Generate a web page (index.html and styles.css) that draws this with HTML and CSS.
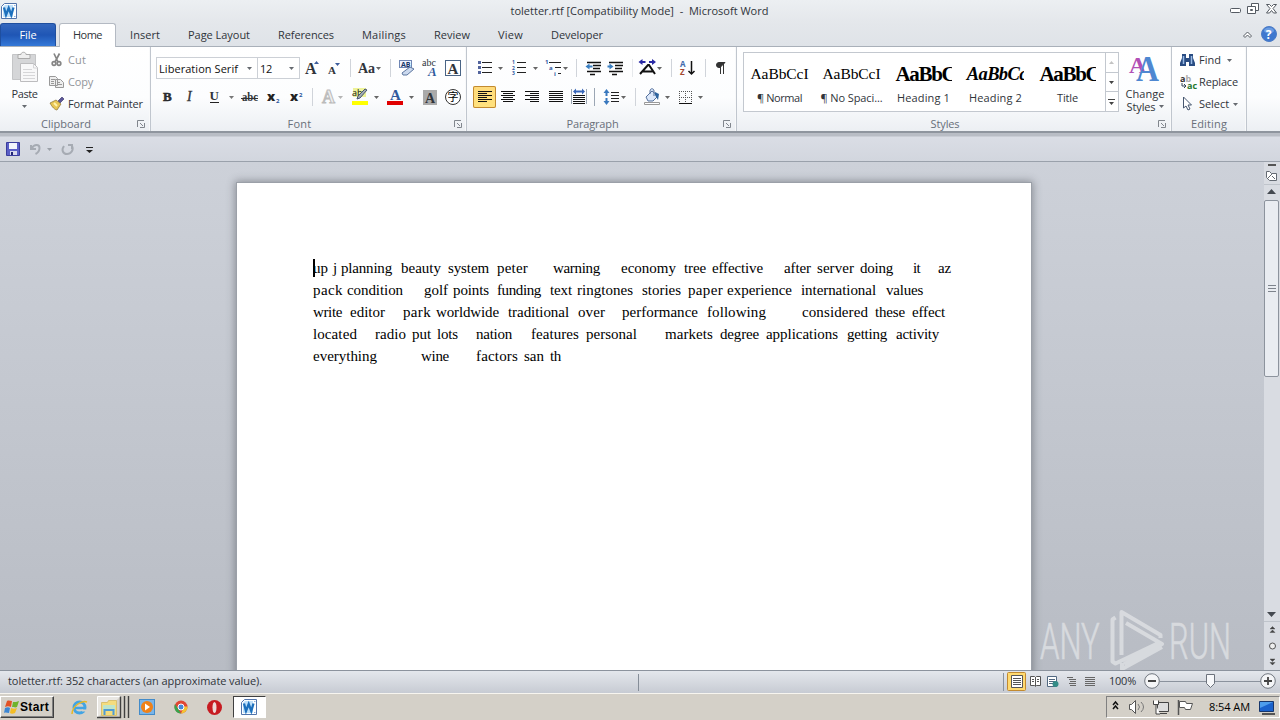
FILE: index.html
```html
<!DOCTYPE html>
<html lang="en">
<head>
<meta charset="utf-8">
<title>toletter.rtf [Compatibility Mode] - Microsoft Word</title>
<link rel="stylesheet" href="styles.css">
</head>
<body>
<svg class="defs" width="0" height="0">
  <defs>
    <symbol id="word" viewBox="0 0 16 16"><path d="M3.500.5h12v15H.5v-12z" fill="#fff" stroke="#5274ab"/><path d="M4 2h8v12H2V4z" fill="#bfe0fa"/><path d="M3 4.500l2 7.500 2.700-7 2.600 7 2.200-7.500" fill="none" stroke="#1d70bd" stroke-width="2.300"/><path d="M13 2.500h1.500M13 13.500h1.500" stroke="#8eb2de"/></symbol>
    <symbol id="arr" viewBox="0 0 5 3"><path d="M0 0h5L2.500 3z" fill="#666a70"/></symbol>
    <symbol id="launch" viewBox="0 0 8 8"><path d="M.5 7V.5H7M3 3l3 3M7.500 3v4.500H3" fill="none" stroke="#81868d"/></symbol>
  </defs>
</svg>
<header class="titlebar">
  <svg class="logo" width="16" height="16"><use href="#word"/></svg>
  <span class="title" data-w="258">toletter.rtf [Compatibility Mode]  -  Microsoft Word</span>
  <svg class="winbtns" width="54" height="16" viewBox="1226 2 54 16" fill="#fff" stroke="#555b63"><rect x="1230.500" y="8.500" width="10" height="4" rx="1"/><path d="M1251.500 3.500h7v7h-7z"/><path d="M1247.500 6.500h8v7h-8zM1250.500 9.500h2v1h-2z"/><path d="M1266.500 4.500h3l2 2 2-2h3l-3.500 4 3.500 4.500h-3l-2-2.500-2 2.500h-3l3.500-4.500z"/></svg>
</header>
<nav class="tabs">
  <span class="tab file"><b data-w="17">File</b></span>
  <span class="tab home"><b data-w="29">Home</b></span>
  <span class="tab" style="width:58px"><b data-w="30">Insert</b></span>
  <span class="tab" style="width:90px"><b data-w="62">Page Layout</b></span>
  <span class="tab" style="width:84px"><b data-w="56">References</b></span>
  <span class="tab" style="width:72px"><b data-w="44">Mailings</b></span>
  <span class="tab" style="width:64px"><b data-w="36">Review</b></span>
  <span class="tab" style="width:53px"><b data-w="25">View</b></span>
  <span class="tab" style="width:80px"><b data-w="52">Developer</b></span>
  <svg class="help" width="44" height="20" viewBox="1236 25 44 20"><path d="M1243.500 36l4-4 4 4-1.500 1.500-2.500-2.500-2.500 2.500z" fill="#fff" stroke="#555b63"/><circle cx="1269" cy="34" r="7.500" fill="#3f78cf" stroke="#4d7cc5"/><ellipse cx="1269" cy="30.500" rx="5" ry="3" fill="#6c9de2"/><text x="1265.800" y="38.500" font-size="12" font-weight="700" fill="#fff">?</text></svg>
</nav>
<main class="ribbon">
  <section class="group g-clip">
    <div class="body">
      <div class="paste">
        <svg width="30" height="34" viewBox="10 50 30 34"><path d="M12.500 54.500h23v25h-23z" fill="#d5d6d8" stroke="#c4c5c7"/><path d="M18 54.500h3c0-3 5-3 5 0h4v4H18z" fill="#eee" stroke="#aaa"/><path d="M20.500 63.500h13l4 4v14h-17z" fill="#f8f8f9" stroke="#bcbcbe"/><path d="M33.500 64v4h4M23 69.500h9M23 72.500h12M23 75.500h12M23 78.500h12" fill="none" stroke="#d6d6d8"/></svg>
        <span class="lab" data-w="26">Paste</span>
        <svg width="5" height="3"><use href="#arr"/></svg>
      </div>
      <div class="stack">
        <div class="cmd dis"><svg width="19" height="20" viewBox="49 50 19 20" fill="none" stroke="#858585" stroke-width="1.700"><path d="M54 53.500l4 8.500M59.500 53.500L55 62"/><circle cx="54" cy="63.500" r="1.800"/><circle cx="59" cy="63.500" r="1.800"/></svg><span data-w="18">Cut</span></div>
        <div class="cmd dis"><svg width="19" height="20" viewBox="49 72 19 20" fill="#eee" stroke="#999"><path d="M49.500 76.500h6l2 2v7h-8zM55.500 79.500h5l3 3v5h-8z"/><path d="M51 79.500h4M51 81.500h3M51 83.500h3M57 82.500h3M57 84.500h5"/></svg><span data-w="25">Copy</span></div>
        <div class="cmd"><svg width="19" height="20" viewBox="49 94 19 20"><path d="M58 101l4-4 2 2-4 4z" fill="#5b579a" stroke="#443f70" stroke-width=".7"/><path d="M50 103l6-3 5 4-4 6c-2 0-5-3-7-7z" fill="#e8c654" stroke="#897030" stroke-width=".7"/><path d="M54 103l3 3" stroke="#fff2ac" stroke-width="2"/></svg><span data-w="75">Format Painter</span></div>
      </div>
    </div>
    <footer><span data-w="50">Clipboard</span><svg width="8" height="8"><use href="#launch"/></svg></footer>
  </section>

  <section class="group g-font">
    <div class="body col">
      <div class="row">
        <div class="combo name"><span data-w="79">Liberation Serif</span><svg width="5" height="3"><use href="#arr"/></svg></div>
        <div class="combo size"><span data-w="12">12</span><svg width="5" height="3"><use href="#arr"/></svg></div>
        <svg width="27" height="22" viewBox="300 57 27 22" class="serif"><text x="305" y="74" font-size="16">A</text><path d="M314 64l2.500-3 2.500 3z" fill="#3c5c9c"/></svg>
        <svg width="23" height="22" viewBox="327 57 23 22" class="serif"><text x="328" y="74" font-size="11">A</text><path d="M335 63h5l-2.500 3z" fill="#3c5c9c"/></svg>
        <svg width="41" height="22" viewBox="350 57 41 22" class="serif"><path d="M350.500 59v18" stroke="#d0d4da"/><text x="358" y="73" font-size="14">Aa</text><path d="M376 67h5l-2.500 3z" fill="#666"/><path d="M390.500 59v18" stroke="#d0d4da"/></svg>
        <svg width="29" height="22" viewBox="391 57 29 22"><rect x="399.500" y="60.500" width="12" height="7" fill="#eef4ff" stroke="#6f86b4"/><text x="401" y="67" font-size="7" font-weight="700" fill="#173568">AB</text><path d="M402 73l8-6 4 2-7 6h-4z" fill="#cbd9ee" stroke="#5d769f"/></svg>
        <svg width="23" height="22" viewBox="420 57 23 22" class="serif"><text x="422" y="66" font-size="10" font-weight="400">abc</text><text class="blue" x="428" y="76" font-size="13" font-style="italic">A</text></svg>
        <svg width="22" height="22" viewBox="443 57 22 22" class="serif"><rect x="445.500" y="60.500" width="15" height="15" fill="#fff" stroke="#496485"/><text x="447.500" y="73.500" font-size="15">A</text></svg>
      </div>
      <div class="row two">
        <svg width="23" height="22" viewBox="156 86 23 22" class="serif"><text x="163" y="101" font-size="13" stroke="#222" stroke-width=".5">B</text></svg>
        <svg width="23" height="22" viewBox="179 86 23 22" class="serif"><text x="187" y="101" font-size="14" font-style="italic" font-weight="400" stroke="#333" stroke-width=".3">I</text></svg>
        <svg width="36" height="22" viewBox="202 86 36 22" class="serif"><text x="209.500" y="100" font-size="13">U</text><path d="M210 102.500h9" stroke="#222"/><path d="M229 96h5l-2.500 3z" fill="#777"/></svg>
        <svg width="24" height="22" viewBox="238 86 24 22" class="serif"><text x="242" y="101" font-size="12" textLength="16" lengthAdjust="spacingAndGlyphs">abc</text><path d="M241 98.500h17" stroke="#333"/></svg>
        <svg width="23" height="22" viewBox="262 86 23 22"><text x="267" y="101" font-size="13" font-weight="800" fill="#222">x</text><text x="276" y="103" font-size="6" font-weight="700" fill="#28559c">2</text></svg>
        <svg width="27" height="22" viewBox="285 86 27 22"><text x="290" y="101" font-size="13" font-weight="800" fill="#222">x</text><text x="299" y="97" font-size="6" font-weight="700" fill="#28559c">2</text></svg>
        <svg width="37" height="22" viewBox="312 86 37 22" class="serif"><path d="M312.500 88v18" stroke="#d0d4da"/><text class="ghost" x="322" y="103" font-size="18">A</text><path d="M338 96h5l-2.500 3z" fill="#b5b5b5"/></svg>
        <svg width="36" height="22" viewBox="349 86 36 22"><rect x="353" y="88" width="13" height="9" fill="#eef399"/><text x="352" y="96" font-size="9" fill="#111">ab</text><path d="M367 90l-7 8-3 1 1-3 7-7z" fill="#a3acb5" stroke="#49586c"/><path d="M352 101h16v4h-16z" fill="#ff0"/><path d="M374 96h5l-2.500 3z" fill="#666"/></svg>
        <svg width="34" height="22" viewBox="385 86 34 22" class="serif"><text class="blue" x="390" y="100" font-size="15">A</text><path d="M387 101h16v4h-16z" fill="#e00000"/><path d="M409 96h5l-2.500 3z" fill="#666"/></svg>
        <svg width="22" height="22" viewBox="419 86 22 22" class="serif"><path d="M423 90h14v15h-14z" fill="#aaa"/><text x="425" y="102.500" font-size="14">A</text></svg>
        <svg width="24" height="22" viewBox="441 86 24 22"><circle cx="453" cy="97" r="7.500" fill="#fff" stroke="#333"/><text x="447.500" y="101" font-size="11" class="cjk">字</text></svg>
      </div>
    </div>
    <footer><span data-w="24">Font</span><svg width="8" height="8"><use href="#launch"/></svg></footer>
  </section>

  <section class="group g-para">
    <div class="body col">
      <div class="row">
        <svg width="36" height="22" viewBox="473 57 36 22"><path d="M482 62.500h10M482 67.500h10M482 72.500h10" stroke="#222"/><path d="M478 61h3v3h-3zM478 66h3v3h-3zM478 71h3v3h-3z" fill="#52649d"/><path d="M498 67h5l-2.500 3z" fill="#666"/></svg>
        <svg width="33" height="22" viewBox="509 57 33 22"><path d="M517 62.500h9M517 67.500h9M517 72.500h9" stroke="#222"/><g font-size="5" font-weight="700" fill="#3158a2"><text x="512" y="64">1</text><text x="512" y="69.500">2</text><text x="512" y="75">3</text></g><path d="M533 67h5l-2.500 3z" fill="#666"/></svg>
        <svg width="35" height="22" viewBox="542 57 35 22"><path d="M549 62.500h12M555 67.500h6M558 73.500h3" stroke="#222"/><g font-size="6" font-weight="700" fill="#3158a2"><text x="545" y="64">1</text><text x="549" y="70">a</text><text x="554" y="76">i</text></g><path d="M563 67h5l-2.500 3z" fill="#666"/><path d="M576.500 59v18" stroke="#d0d4da"/></svg>
        <svg width="30" height="22" viewBox="577 57 30 22"><path d="M587 62.500h14M593 65.500h8M593 68.500h7M587 71.500h14M590 74.500h5" stroke="#111" stroke-width="1.500"/><path d="M585.500 66.500l4-3v2h3v2h-3v2z" fill="#397ec1"/></svg>
        <svg width="25" height="22" viewBox="607 57 25 22"><path d="M609 62.500h14M615 65.500h8M615 68.500h7M609 71.500h14M612 74.500h5" stroke="#111" stroke-width="1.500"/><path d="M613.500 66.500l-4-3v2h-2v2h2v2z" fill="#397ec1"/></svg>
        <svg width="40" height="22" viewBox="632 57 40 22"><path d="M632 59v18M671.500 59v18" stroke="#d0d4da"/><path d="M640 74l8-9h1l6 9M643 71.500h10" fill="none" stroke="#111" stroke-width="2"/><path d="M638.500 62l4-3v2h3v2h-3v2zM656 62l-4-3v2h-3v2h3v2z" fill="#2929a5"/><path d="M657 67h5l-2.500 3z" fill="#666"/></svg>
        <svg width="34" height="22" viewBox="672 57 34 22"><text x="680" y="66.500" font-size="8" font-weight="700" fill="#436bad">A</text><text x="680" y="75" font-size="8" font-weight="700" fill="#a34731">Z</text><path d="M691.500 61v12M688.500 71l3 3 3-3" fill="none" stroke="#111" stroke-width="1.500"/><path d="M705.500 59v18" stroke="#d0d4da"/></svg>
        <svg width="25" height="22" viewBox="706 57 25 22"><path d="M725 62.500h-6a2.500 2.500 0 000 5h1zM720.500 63v11M723.500 63v11" fill="#333" stroke="#333"/></svg>
      </div>
      <div class="row two">
        <svg class="active" width="23" height="22" viewBox="473 86 23 22" stroke="#111" stroke-width="1"><path d="M478 91.500h14M478 93.500h9M478 95.500h14M478 97.500h9M478 99.500h14M478 101.500h9"/></svg>
        <svg width="24" height="22" viewBox="496 86 24 22" stroke="#111"><path d="M501 91.500h14M503 93.500h10M501 95.500h14M503 97.500h10M501 99.500h14M503 101.500h10"/></svg>
        <svg width="24" height="22" viewBox="520 86 24 22" stroke="#111"><path d="M525 91.500h14M530 93.500h9M525 95.500h14M530 97.500h9M525 99.500h14M530 101.500h9"/></svg>
        <svg width="24" height="22" viewBox="544 86 24 22" stroke="#111"><path d="M549 91.500h14M549 93.500h14M549 95.500h14M549 97.500h14M549 99.500h14M549 101.500h14"/></svg>
        <svg width="27" height="22" viewBox="568 86 27 22"><path d="M573 95.500h12M573 97.500h12M573 99.500h12M573 101.500h12M573 103.500h12" stroke="#111"/><path d="M571.500 89v15M586.500 89v15M594.500 88v18" stroke="#9ba6b4"/><path d="M573 91.500l3-3v2h6v-2l3 3-3 3v-2h-6v2z" fill="#3867b9"/></svg>
        <svg width="41" height="22" viewBox="595 86 41 22"><path d="M611 92.500h8M611 95.500h8M611 98.500h8M611 101.500h8" stroke="#222"/><path d="M606.500 89l3 4h-2v3h-2v-3h-2zM606.500 105l3-4h-2v-3h-2v3h-2z" fill="#3978be"/><path d="M621 96h5l-2.500 3z" fill="#666"/><path d="M635.500 88v18" stroke="#d0d4da"/></svg>
        <svg width="38" height="22" viewBox="636 86 38 22"><path d="M646 97l6-6 6 5-5 5h-5zM650 94v-3c0-3 4-3 4 0v5" fill="#dce8fa" stroke="#536f9b"/><path d="M655 92l4 2-1 6-3-5z" fill="#2e649f"/><path d="M644.500 102.500h15v2h-15z" fill="#fff" stroke="#999"/><path d="M665 96h5l-2.500 3z" fill="#666"/></svg>
        <svg width="33" height="22" viewBox="674 86 33 22"><path d="M679 91.500h13M679 97.500h13M679.500 91v12M685.500 91v12M691.500 91v12" stroke="#555" stroke-dasharray="1 1"/><path d="M679 103.500h13" stroke="#111"/><path d="M698 96h5l-2.500 3z" fill="#666"/></svg>
      </div>
    </div>
    <footer><span data-w="52">Paragraph</span><svg width="8" height="8"><use href="#launch"/></svg></footer>
  </section>

  <section class="group g-styles">
    <div class="body">
      <div class="gallery">
        <div class="sty"><i data-w="58">AaBbCcI</i><span data-w="45">¶ Normal</span></div>
        <div class="sty"><i data-w="58">AaBbCcI</i><span data-w="62">¶ No Spaci...</span></div>
        <div class="sty bold"><i data-w="60">AaBb<u>C</u></i><span data-w="53">Heading 1</span></div>
        <div class="sty bold it"><i data-w="60">AaBbC<u>c</u></i><span data-w="53">Heading 2</span></div>
        <div class="sty bold"><i data-w="60">AaBb<u>C</u></i><span data-w="21">Title</span></div>
        <svg class="gscroll" width="13" height="58" viewBox="0 0 13 58"><path d="M.5 0v58M0 19.500h13M0 38.500h13" stroke="#c3c8cf"/><path d="M4 11h5L6.500 8z" fill="#c3c3c3"/><path d="M4 28h5l-2.500 3zM4 49h5l-2.500 3z" fill="#444"/><path d="M3 46.500h7" stroke="#444"/></svg>
      </div>
      <div class="change">
        <svg width="34" height="34" viewBox="1128 51 34 34" class="serif"><text class="violet" x="1129" y="73" font-size="24">A</text><text class="sky" x="1136" y="81" font-size="35" textLength="23" lengthAdjust="spacingAndGlyphs">A</text></svg>
        <span class="lab" data-w="39">Change</span>
        <span class="lab2"><span data-w="29">Styles</span><svg width="5" height="3"><use href="#arr"/></svg></span>
      </div>
    </div>
    <footer><span data-w="29">Styles</span><svg width="8" height="8"><use href="#launch"/></svg></footer>
  </section>

  <section class="group g-edit">
    <div class="body">
      <div class="stack">
        <div class="cmd"><svg width="19" height="20" viewBox="1180 50 19 20"><path d="M1182 54h4v4h3v-4h4v4l2 5v3h-6v-4h-3v4h-6v-3l2-5z" fill="#294c83"/><path d="M1183.500 56v8M1191.500 56v8" stroke="#9abbe5" stroke-width="1.500"/></svg><span data-w="22">Find</span><svg class="dd" width="5" height="3"><use href="#arr"/></svg></div>
        <div class="cmd"><svg width="19" height="20" viewBox="1180 72 19 20" font-weight="700"><text x="1180" y="82" font-size="9" fill="#333">a<tspan fill="#aaa">b</tspan></text><text x="1187" y="89" font-size="9" fill="#26782d">ac</text><path d="M1182 83v3h4M1184 84l2 2-2 2" fill="none" stroke="#345"/></svg><span data-w="39">Replace</span></div>
        <div class="cmd"><svg width="19" height="20" viewBox="1180 94 19 20"><path d="M1183.500 97v11l2.500-2 2 4 2-1-2-4h3.500z" fill="#fff" stroke="#45566f"/></svg><span data-w="30">Select</span><svg class="dd sel" width="5" height="3"><use href="#arr"/></svg></div>
      </div>
    </div>
    <footer><span data-w="36">Editing</span></footer>
  </section>
</main>
<div class="qat">
  <svg width="100" height="24" viewBox="0 137 100 24"><path d="M6.500 142.500h13v13h-13z" fill="#5a5ec6" stroke="#3a3d9c"/><path d="M9 143h8v6H9z" fill="#f2f5fc"/><path d="M10 151h7v4h-7z" fill="#d8d9ed"/><path d="M11 152h2v3h-2z" fill="#222676"/><path d="M31 145v4h5M31.500 148.500c3-5 8-4 8-.5 0 3-2 5-4 6" fill="none" stroke="#a6abb3" stroke-width="2"/><path d="M47 148h5l-2.500 3z" fill="#9ca1a9"/><path d="M64 146c-3 4-1 8 3 8s7-4 5-8M68 145h4v4" fill="none" stroke="#a6abb3" stroke-width="2"/><path d="M86 147.500h7" stroke="#222"/><path d="M86 150h7l-3.500 3z" fill="#222"/></svg>
</div>
<div class="workspace">
  <article class="page"><div id="text"></div><div class="caret"></div></article>
  <svg class="mark" width="200" height="66" viewBox="1036 606 200 66"><g class="brand"><text transform="translate(1040 659) scale(.72 1)" textLength="83" lengthAdjust="spacingAndGlyphs">ANY</text><text transform="translate(1169 659) scale(.72 1)" textLength="86" lengthAdjust="spacingAndGlyphs">RUN</text></g><path d="M1115.500 617.500l-3 2v42l3 2 44-21M1121.500 655v-43l39 23v3M1122 663v6l40-22M1126 623l36 21-38 20" fill="none" stroke="#e2e4e7" stroke-width="4" stroke-linejoin="round"/></svg>
  <svg class="scroll" width="16" height="508" viewBox="1264 162 16 508"><path d="M1264 162h16v508h-16z" fill="#d9dce2"/><path d="M1268 165h8" stroke="#555" stroke-width="2"/><path d="M1266.500 171.500h3l2 2h5v7h-7l-3-3zM1272 176l3 3M1268 178l4-4" fill="#fff" stroke="#646a73"/><path d="M1264 184.500h16M1264 621.500h16" stroke="#bfc4cb"/><path d="M1267 194h9l-4.500-5zM1267 612h9l-4.500 5z" fill="#444950"/><rect x="1264.500" y="200.500" width="14" height="176" rx="1.500" fill="#e9ecf1" stroke="#8c939d"/><path d="M1268 285.500h8M1268 288.500h8M1268 291.500h8" stroke="#7d838c"/><path d="M1270 629l2.500-2.500 2.500 2.500zM1270 632.500l2.500-2.500 2.500 2.500zM1270 659h5l-2.500 2.500zM1270 662.500h5l-2.500 2.500z" fill="#444" stroke="#444" stroke-width=".4"/><circle cx="1272.500" cy="646" r="3" fill="#eee" stroke="#555"/></svg>
</div>
<div class="status">
  <span class="chars" data-w="254">toletter.rtf: 352 characters (an approximate value).</span>
  <span class="split"></span>
  <svg width="104" height="22" viewBox="1002 671 104 22"><path d="M1003.500 673v18" stroke="#8a939f"/><rect x="1007.500" y="672.500" width="18" height="18" rx="1" fill="#ffda70" stroke="#c28a30"/><path d="M1011.500 675.500h11v12h-11z" fill="#fff" stroke="#555"/><path d="M1013 678.500h8M1013 680.500h8M1013 682.500h8M1013 684.500h8" stroke="#555"/><path d="M1030.500 676.500h4l1 1 1-1h4v9h-4l-1 1-1-1h-4zM1035.500 677v9M1032 679.500h2M1032 681.500h2M1037 679.500h2M1037 681.500h2" fill="#fff" stroke="#555"/><path d="M1047.500 676.500h9v10h-9zM1049 679.500h6M1049 681.500h6M1049 683.500h4" fill="#fff" stroke="#526981"/><circle cx="1055.500" cy="684" r="3" fill="#348c87"/><path d="M1067 677.500h6M1069 679.500h7M1070 681.500h6M1069 683.500h7M1070 685.500h6M1085 677.500h10M1085 679.500h10M1085 681.500h10M1085 683.500h10M1085 685.500h10" stroke="#666"/></svg>
  <span class="zoom" data-w="27">100%</span>
  <svg class="slider" width="136" height="22" viewBox="1144 671 136 22"><path d="M1160 681.500h101" stroke="#8b929d"/><circle cx="1152" cy="681" r="7.300" fill="#f4f5f7" stroke="#70767f"/><circle cx="1268" cy="681" r="7.300" fill="#f4f5f7" stroke="#70767f"/><path d="M1148 681h8M1264 681h8M1268 677v8" stroke="#444" stroke-width="1.800"/><path d="M1206.500 674.500h8v9l-4 4-4-4z" fill="#f7f8fa" stroke="#6c727c"/></svg>
</div>
<div class="taskbar">
  <div class="start"><svg width="16" height="16" viewBox="0 0 16 16"><path d="M3 2c2-1 3 0 5 0L7 8C5 7 3 7 1 8z" fill="#e25225"/><path d="M9 3c2 0 4 0 6-1l-2 6c-2 1-3 0-5 0z" fill="#70b32c"/><path d="M1 9c2-1 4-1 5 0l-1 5c-2 0-3-1-5 0z" fill="#3c86d3"/><path d="M7 9c2 1 4 1 6 0l-2 5c-2 1-4 1-5 0z" fill="#f4bd25"/></svg><b data-w="29">Start</b></div>
  <svg width="165" height="26" viewBox="66 694 165 26"><g fill="none"><circle cx="79.500" cy="707.500" r="5.500" stroke="#42a4e4" stroke-width="3"/><path d="M75 708h10" stroke="#42a4e4" stroke-width="2.500"/><path d="M72 714c0-8 10-14 15-12" stroke="#e8b826" stroke-width="1.500"/><path d="M86 710.500h-4" stroke="#d4d0c8" stroke-width="2"/></g><path d="M97.500 717.500v-21h23" fill="#e9e7e3" stroke="#fff"/><path d="M97 717.500h23.500v-21M124.500 696v22M128.500 696v22" fill="none" stroke="#404040" stroke-width="1.400"/><path d="M101.500 702.500h6l1-2h8v15h-15z" fill="#f4dc7e" stroke="#d9c070"/><path d="M103 705h12v6h-12z" fill="#bee5cb"/><path d="M104.500 715v-5h9v5" fill="none" stroke="#4f9bd4" stroke-width="2"/><rect x="139.500" y="699.500" width="15" height="15" fill="#7ab5e9" stroke="#438bc9"/><circle cx="147" cy="707" r="6" fill="#ef8119"/><path d="M145 703.500l5 3.500-5 3.500z" fill="#fff"/><circle cx="181" cy="707" r="6.500" fill="#e04735"/><path d="M175 704l6 9.500c-5 0-8-5-6-9.500z" fill="#37a44e"/><path d="M181 713.500l3-7h3.500c0 4-3 7-6.500 7z" fill="#f3c432"/><circle cx="181" cy="707" r="3" fill="#4588da" stroke="#fff"/><ellipse cx="214.500" cy="707.500" rx="7.500" ry="7.500" fill="#c71b21"/><ellipse cx="214.500" cy="707.500" rx="2" ry="5.500" fill="#eddad8"/></svg>
  <div class="wtask"><svg width="16" height="16"><use href="#word"/></svg></div>
  <div class="tray">
    <svg width="96" height="22" viewBox="1107 696 96 22"><path d="M1113 705l2.500-3 2.500 3M1113 709l2.500-3 2.500 3" fill="none" stroke="#111" stroke-width="1.500"/><path d="M1129.500 704.500h2l4-4v13l-4-4h-2z" fill="#fff" stroke="#555"/><path d="M1138 704q3 3 0 6M1141 702q5 5 0 10" fill="none" stroke="#777"/><path d="M1157.500 702.500h11v9h-11zM1160 713.500h7" fill="#ddd" stroke="#444"/><path d="M1153.500 700.500v4h5v-4M1156 705v9h4" fill="#fff" stroke="#444"/><path d="M1178.500 700v15" stroke="#555" stroke-width="1.500"/><path d="M1179.500 701.500h6l1 2h6l-2 6h-5l-1-2h-5z" fill="#fff" stroke="#555"/></svg>
    <span data-w="41">8:54 AM</span>
    <svg width="26" height="22" viewBox="1251 696 26 22"><path d="M1260.500 701.500h14v10h-14z" fill="#1b62cc" stroke="#17366b"/><path d="M1261 702h13l-13 6z" fill="#4e9dec"/><path d="M1263 714h13" stroke="#555" stroke-width="2"/></svg>
  </div>
</div>
<script src="app.js"></script>
</body>
</html>
```
FILE: styles.css
```css
* { box-sizing: border-box; }
body { margin: 0; width: 1280px; height: 720px; overflow: hidden; display: flex; flex-direction: column; font: 11px "Open Sans", "Noto Sans", sans-serif; color: #30343a; }
svg { display: block; flex: none; }
.defs { position: absolute; }
[data-w] { white-space: pre; display: block; flex: none; }
.titlebar { height: 23px; background: linear-gradient(#eceff2, #e4e7eb); display: flex; align-items: flex-start; justify-content: space-between; padding: 2px 0 0 1px; }
.titlebar .logo { margin-top: 1px; }
.title { line-height: 17px; padding-left: 38px; margin-left: -2px; }
.tabs { height: 24px; background: linear-gradient(#e4e7eb, #dfe3e8); border-bottom: 1px solid #a9b0b9; display: flex; }
.tab { height: 23px; display: flex; justify-content: center; line-height: 24px; }
.tab b { font-weight: 400; }
.file { width: 56px; background: linear-gradient(#3467bd, #1f56b5 50%, #3579d8); border: 1px solid #1f4f9f; border-bottom: 0; border-radius: 3px 3px 0 0; color: #fff; line-height: 22px; }
.home { width: 57px; height: 24px; margin-left: 3px; background: #fff; border: 1px solid #b4bac3; border-bottom: 0; border-radius: 3px 3px 0 0; line-height: 22px; }
.help { margin: 2px 0 0 auto; }
.ribbon { height: 86px; display: flex; background: linear-gradient(#fff, #fcfdfe 60%, #eceff3); border-bottom: 2px solid #8f959e; }
.group { position: relative; display: flex; flex-direction: column; border-right: 1px solid #c0c6ce; box-shadow: inset -1px 0 #f8f9fa; }
.g-clip { width: 151px; } .g-font { width: 316px; } .g-para { width: 270px; } .g-styles { width: 435px; } .g-edit { width: 75px; }
.body { height: 70px; display: flex; }
.body.col { flex-direction: column; padding-top: 10px; }
.row { display: flex; height: 22px; }
.two { margin-top: 7px; }
.g-font .row { padding-left: 5px; } .g-para .row { padding-left: 6px; }
.group footer { height: 14px; line-height: 14px; display: flex; justify-content: center; color: #686f79; padding-right: 18px; }
.group footer svg { position: absolute; right: 5px; bottom: 3px; }
.g-font footer svg { right: 4px; }
.g-edit footer { padding-right: 0; }
.paste { width: 49px; display: flex; flex-direction: column; align-items: center; padding-top: 3px; }
.lab { line-height: 16px; margin-bottom: 3px; }
.paste .lab { margin-top: 2px; }
.stack { padding-top: 3px; display: flex; flex-direction: column; gap: 2px; }
.cmd { height: 20px; display: flex; align-items: center; line-height: 20px; }
.dd { margin-left: 6px; }
.dd.sel { margin-left: 4px; }
.dis { color: #92959a; }
.combo { height: 22px; border: 1px solid #ccd0d6; background: #fff; display: flex; align-items: center; justify-content: space-between; padding: 0 5px 0 2px; color: #111; }
.name { width: 102px; } .size { width: 43px; margin-left: -1px; }
.serif text { font-family: "Liberation Serif", serif; font-weight: bold; fill: #30343a; }
.serif text[font-weight="400"] { font-weight: 400; }
.serif .blue { fill: #315b9d; }
.serif .violet { fill: #b24fb5; }
.serif .sky { fill: #4e87d1; }
.serif .ghost { fill: #eee; stroke: #bbb; stroke-width: 1; }
.cjk { font-family: "Noto Sans CJK JP", sans-serif; }
.active { background: linear-gradient(#ffdb7c, #ffe27e); border-radius: 2px; box-shadow: inset 0 0 0 1px #c28a30; }
.gallery { margin: 5px 0 0 6px; width: 376px; height: 60px; border: 1px solid #c3c8cf; background: #fff; display: flex; }
.sty { width: 72px; display: flex; flex-direction: column; align-items: center; }
.gscroll { margin-left: auto; }
.sty i { font: 15.500px/20px "Liberation Serif", serif; color: #000; height: 31px; padding-top: 11px; margin-left: -1px; }
.bold i { font-weight: bold; font-size: 21px; }
.it i { font-style: italic; font-size: 18.500px; }
.sty u { text-decoration: none; display: inline-block; width: 10px; overflow: hidden; vertical-align: top; height: 20px; }
.it u { width: 5px; }
.sty span { line-height: 27px; margin-left: -1px; }
.change { width: 52px; display: flex; flex-direction: column; align-items: center; padding-top: 4px; }
.change .lab { margin: 2px 0 0; line-height: 14px; }
.lab2 { display: flex; align-items: center; gap: 3px; line-height: 11px; }
.g-edit .stack { padding-left: 8px; }
.qat { height: 29px; padding-top: 4px; background: linear-gradient(#b9bdc5 0, #b9bdc5 3px, #dadde5 4px, #d2d6de); border-bottom: 1px solid #9aa1ab; }
.workspace { position: relative; height: 508px; background: linear-gradient(#cdd1d9, #b8bcc4); overflow: hidden; display: flex; justify-content: space-between; }
.page { position: relative; width: 794px; height: 500px; flex: none; margin: 21px 0 0 237px; padding: 74px 0 0 76px; background: #fff; box-shadow: 0 0 0 1px #9ba0a8, 0 0 8px 2px rgba(60, 65, 72, .45); }
.line { display: flex; height: 22px; font: 15px/22px "Liberation Serif", serif; color: #000; }
.line span { flex: none; white-space: pre; }
.caret { position: absolute; left: 76px; top: 76px; width: 2px; height: 18px; background: #000; }
.mark { position: absolute; left: 1036px; top: 444px; opacity: .75; }
.brand text { font: 300 50px Roboto, "Open Sans", sans-serif; fill: #e2e4e7; stroke: #e2e4e7; stroke-width: .6; }
.status { height: 23px; border-top: 1px solid #8c939d; background: linear-gradient(#e4e7ec, #c7cbd3); display: flex; line-height: 20px; padding-left: 8px; }
.split { width: 1px; margin: 3px 363px 2px 376px; background: #858d98; }
.zoom { margin-left: 3px; }
.slider { margin-left: auto; }
.taskbar { height: 27px; background: #d4d0c8; border-top: 1px solid #f7f5ef; display: flex; align-items: center; }
.start { width: 54px; height: 22px; display: flex; align-items: center; padding-left: 3px; border: 1px solid; border-color: #fff #404040 #404040 #fff; box-shadow: inset -1px -1px #808080; color: #000; margin-right: 12px; font: bold 12px/18px "Liberation Sans", sans-serif; }
.wtask { width: 33px; height: 22px; display: flex; align-items: center; justify-content: center; background: #fff; border: 1px solid; border-color: #404040 #fff #fff #404040; margin-left: 2px; padding-right: 1px; }
.tray { margin-left: auto; width: 174px; height: 22px; display: flex; align-items: center; border: 1px solid; border-color: #808080 #fff #fff #808080; color: #000; }
.tray span { margin: -2px 0 0 6px; }
```
FILE: app.js
```js
// Each entry is a word with its start and end offset inside the text column.
const lines = [
  [['up',0,15],['j',20,24],['planning',28,79],['beauty',88,128],['system',135,176],['peter',184,215],['warning',240,287],['economy',308,363],['tree',371,393],['effective',399,450],['after',471,498],['server',504,541],['doing',547,580],['it',600,607],['az',625,638]],
  [['pack',0,30],['condition',34,90],['golf',111,135],['points',140,176],['funding',184,228],['text',237,259],['ringtones',264,320],['stories',329,368],['paper',375,410],['experience',414,479],['international',488,563],['values',573,610]],
  [['write',0,29],['editor',37,72],['park',90,118],['worldwide',123,186],['traditional',195,256],['over',265,292],['performance',309,385],['following',394,453],['considered',489,555],['these',562,592],['effect',599,632]],
  [['located',0,44],['radio',62,93],['put',99,118],['lots',124,145],['nation',163,199],['features',218,266],['personal',273,324],['markets',352,400],['degree',407,446],['applications',453,525],['getting',534,574],['activity',583,626]],
  [['everything',0,64],['wine',108,136],['factors',163,205],['san',211,231],['th',237,248]]
];

function fit(el, target) {
  const range = document.createRange();
  range.selectNodeContents(el);
  const n = el.textContent.length;
  const now = range.getBoundingClientRect().width;
  el.style.letterSpacing = ((target - now) / n).toFixed(3) + 'px';
}

document.querySelectorAll('[data-w]').forEach(el => fit(el, Number(el.dataset.w)));

const host = document.getElementById('text');
for (const words of lines) {
  const row = document.createElement('div');
  row.className = 'line';
  host.append(row);
  words.forEach(([word, start, end], i) => {
    const span = document.createElement('span');
    const next = words[i + 1];
    span.textContent = word + (next ? ' ' : '');
    row.append(span);
    const text = document.createRange();
    text.setStart(span.firstChild, 0);
    text.setEnd(span.firstChild, word.length);
    const extra = (end - start - text.getBoundingClientRect().width) / word.length;
    span.style.letterSpacing = extra.toFixed(3) + 'px';
    if (next) span.style.width = (next[1] - start) + 'px';
  });
}
```
